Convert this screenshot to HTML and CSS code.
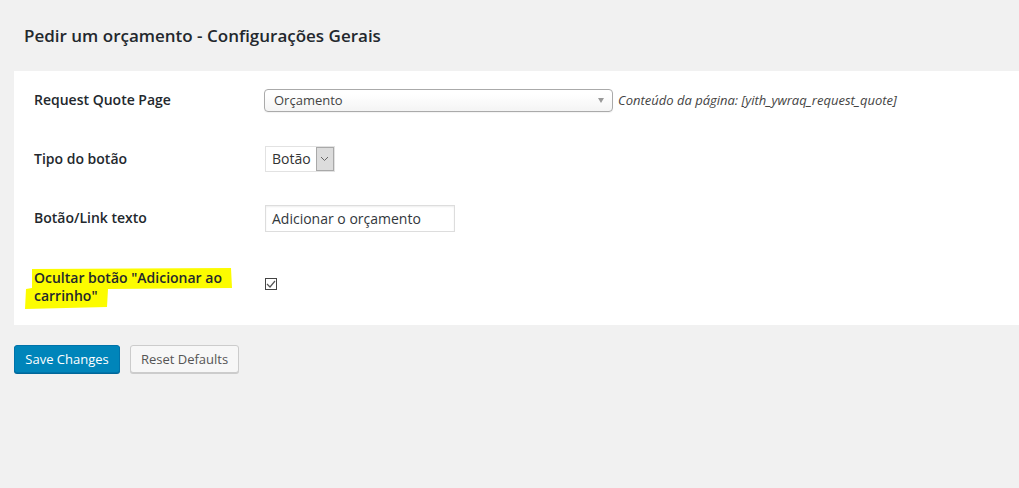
FILE: index.html
```html
<!DOCTYPE html>
<html lang="pt">
<head>
<meta charset="utf-8">
<title>Pedir um orçamento</title>
<link rel="stylesheet" href="styles.css">
</head>
<body>
<div class="wrap">
  <h2 class="title">Pedir um orçamento - Configurações Gerais</h2>
  <div class="panel">
    <div class="row r1">
      <div class="label">Request Quote Page</div>
      <div class="field">
        <div class="select-wide"><span>Orçamento</span><span class="tri"></span></div>
        <span class="desc">Conteúdo da página: [yith_ywraq_request_quote]</span>
      </div>
    </div>
    <div class="row r2">
      <div class="label">Tipo do botão</div>
      <div class="field">
        <div class="select-small"><span class="sv">Botão</span><span class="sbtn"><svg width="9" height="6" viewBox="0 0 9 6"><path d="M1 1 L4.5 4.5 L8 1" fill="none" stroke="#666" stroke-width="1"/></svg></span></div>
      </div>
    </div>
    <div class="row r3">
      <div class="label">Botão/Link texto</div>
      <div class="field">
        <div class="input">Adicionar o orçamento</div>
      </div>
    </div>
    <div class="row r4">
      <div class="label hl">
        <svg class="marker" width="220" height="46" viewBox="0 0 220 46"><polygon points="8,1 207,0 208,20 84,21 83,39 1,41 2,21 8,20" fill="#fcfc00"/></svg>
        <span class="ltext">Ocultar botão "Adicionar ao carrinho"</span>
      </div>
      <div class="field">
        <span class="checkbox"><svg width="10" height="8" viewBox="0 0 10 8"><path d="M1 4 L4 7 L9 1" fill="none" stroke="#555" stroke-width="1.2"/></svg></span>
      </div>
    </div>
  </div>
  <div class="actions">
    <button class="btn primary">Save Changes</button>
    <button class="btn secondary">Reset Defaults</button>
  </div>
</div>
</body>
</html>
```
FILE: styles.css
```css
html, body { margin: 0; padding: 0; }
body {
  background: #f1f1f1;
  font-family: "Open Sans", "Liberation Sans", sans-serif;
  color: #23282d;
  width: 1019px;
  height: 488px;
  overflow: hidden;
}
.wrap { padding-left: 14px; }
.title {
  margin: 0;
  padding: 24px 0 0 10px;
  height: 47px;
  box-sizing: border-box;
  font-size: 17px;
  font-weight: 600;
  line-height: 23px;
  color: #23282d;
}
.panel {
  background: #fff;
  margin-top: 24px;
  padding: 0 20px;
}
.row { display: flex; align-items: center; }
.r1 { height: 58px; }
.r2 { height: 59px; }
.r3 { height: 60px; }
.r4 { height: 77px; }
.label {
  width: 230px;
  flex: none;
  font-size: 14px;
  font-weight: 600;
  line-height: 18px;
  color: #23282d;
}
.r2 .label, .r3 .label { width: 231px; }
.r4 .hl { position: relative; width: 200px; margin-right: 31px; }
.marker { position: absolute; left: -10px; top: -1px; }
.ltext { position: relative; }
.field { display: flex; align-items: center; }
.select-wide {
  width: 349px;
  height: 23px;
  box-sizing: border-box;
  border: 1px solid #aaa;
  border-radius: 4px;
  background: linear-gradient(#fff 20%, #f4f4f4 100%);
  display: flex;
  align-items: center;
  justify-content: space-between;
  padding: 0 8px 0 9px;
  font-size: 13px;
  color: #444;
  box-shadow: 0 1px 1px rgba(0,0,0,0.05);
}
.tri {
  width: 0; height: 0;
  border-left: 3.5px solid transparent;
  border-right: 3.5px solid transparent;
  border-top: 5px solid #999;
}
.desc {
  margin-left: 5px;
  font-style: italic;
  font-size: 13px;
  color: #444;
}
.select-small {
  display: flex;
  height: 26px;
  box-sizing: border-box;
  border: 1px solid #e2e2e2;
  background: #fff;
}
.sv {
  font-size: 14px;
  color: #333;
  padding: 0 5px 0 6px;
  line-height: 24px;
}
.sbtn {
  width: 18px;
  box-sizing: border-box;
  background: #dcdcdc;
  border: 1px solid #a9a9a9;
  display: flex;
  align-items: center;
  justify-content: center;
}
.input {
  width: 190px;
  height: 27px;
  box-sizing: border-box;
  border: 1px solid #ddd;
  background: #fff;
  font-size: 14px;
  color: #32373c;
  padding-left: 6px;
  line-height: 25px;
  box-shadow: inset 0 1px 2px rgba(0,0,0,0.07);
}
.checkbox {
  width: 12px;
  height: 12px;
  box-sizing: border-box;
  border: 1px solid #444;
  background: #fff;
  display: flex;
  align-items: center;
  justify-content: center;
  margin-top: -6px;
}
.actions {
  display: flex;
  gap: 10px;
  margin-top: 20px;
}
.btn {
  font-family: "Open Sans", "Liberation Sans", sans-serif;
  font-size: 13px;
  height: 28px;
  padding: 0;
  border-radius: 3px;
  line-height: 26px;
  box-sizing: border-box;
  white-space: nowrap;
  cursor: pointer;
}
.primary {
  width: 106px;
  background: #0085ba;
  border: 1px solid #0073aa;
  color: #fff;
  box-shadow: 0 1px 0 #006799;
}
.secondary {
  width: 109px;
  background: #f7f7f7;
  border: 1px solid #ccc;
  color: #555;
  box-shadow: 0 1px 0 #ccc;
}
```
